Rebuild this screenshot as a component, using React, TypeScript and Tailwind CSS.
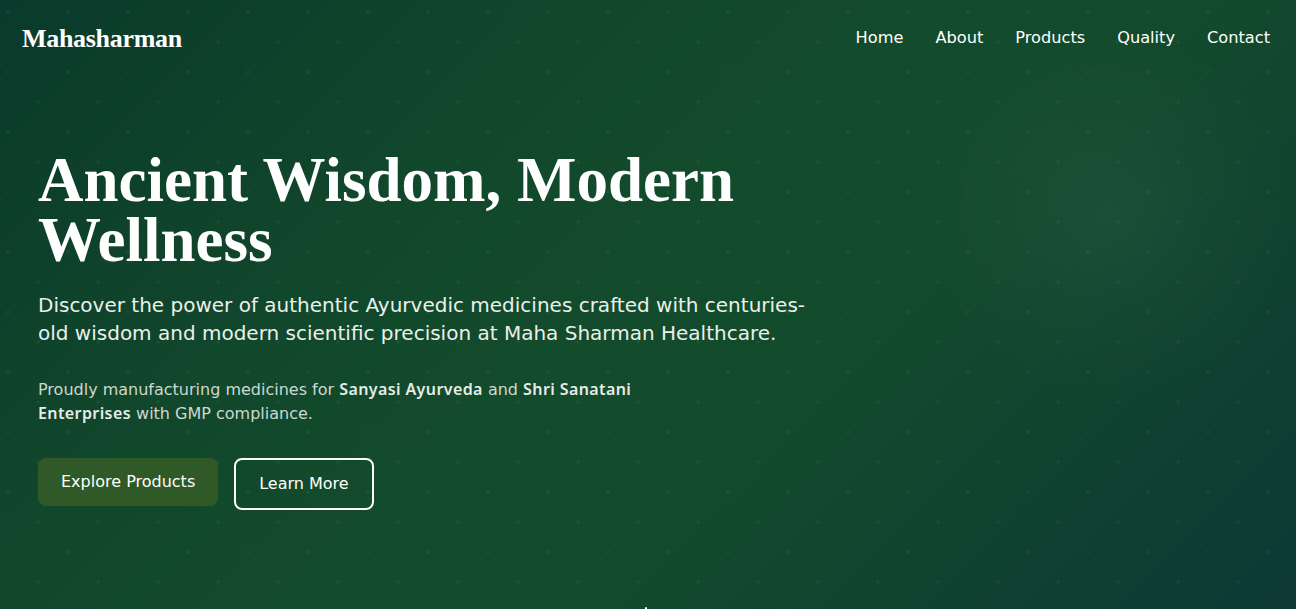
import React from "react";

const sans = "font-['DejaVu_Sans','Noto_Sans',sans-serif]";
const serif = "font-['Liberation_Serif','DejaVu_Serif',serif]";
const strong = "font-['Noto_Sans','DejaVu_Sans',sans-serif] font-semibold leading-[20px] tracking-[0.4px] text-[#e6ece7]";

export default function App() {
  return (
    <div className="relative h-[609px] w-full overflow-hidden bg-[linear-gradient(135deg,#0a3a2b_0%,#11472b_30%,#134c2c_50%,#124a2d_65%,#0d3835_100%)] text-white">
      <div className="pointer-events-none absolute inset-0 bg-[radial-gradient(circle_at_1110px_215px,rgba(255,255,255,0.045)_0px,rgba(255,255,255,0.02)_90px,transparent_190px)]" />
      <div className="pointer-events-none absolute inset-0 bg-[radial-gradient(circle_at_8px_12px,rgba(255,255,255,0.05)_0px,rgba(255,255,255,0.05)_1.2px,transparent_2px),radial-gradient(circle_at_38px_42px,rgba(255,255,255,0.05)_0px,rgba(255,255,255,0.05)_1.2px,transparent_2px)] bg-[length:60px_60px]" />

      <div className="relative">
        <nav className="flex items-start justify-between pl-[22px] pr-[26px] pt-[23px] pb-[23px]">
          <a className={`${serif} text-[26px] font-bold leading-[32px] tracking-[-0.3px] text-white`}>
            Mahasharman
          </a>
          <ul className={`${sans} mt-[3px] flex gap-8 text-[16.2px] leading-6 text-white`}>
            <li>Home</li>
            <li>About</li>
            <li>Products</li>
            <li>Quality</li>
            <li>Contact</li>
          </ul>
        </nav>

        <section className="pl-[38px] pt-[72px]">
          <h1 className={`${serif} text-[63px] font-bold leading-[60px] text-white`}>
            <span className="block whitespace-nowrap">Ancient Wisdom, Modern</span>
            <span className="block whitespace-nowrap">Wellness</span>
          </h1>
          <p className={`${sans} mt-[21px] text-[20px] leading-7 text-[#eaf0eb]`}>
            <span className="block whitespace-nowrap">
              Discover the power of authentic Ayurvedic medicines crafted with centuries-
            </span>
            <span className="block whitespace-nowrap">
              old wisdom and modern scientific precision at Maha Sharman Healthcare.
            </span>
          </p>
          <p className={`${sans} mt-[31px] text-[16px] leading-6 text-[#cdd8d0]`}>
            <span className="block whitespace-nowrap">
              Proudly manufacturing medicines for{" "}
              <strong className={strong}>Sanyasi Ayurveda</strong> and{" "}
              <strong className={strong}>Shri Sanatani</strong>
            </span>
            <span className="block whitespace-nowrap">
              <strong className={strong}>Enterprises</strong> with GMP compliance.
            </span>
          </p>
          <div className={`${sans} mt-8 flex items-start gap-4 text-[16px] leading-6`}>
            <button className="rounded-lg bg-[#2f5927] px-[23px] py-3 text-white">
              Explore Products
            </button>
            <button className="rounded-lg border-2 border-white px-[23px] py-3 text-white">
              Learn More
            </button>
          </div>
        </section>
      </div>

      <div className="absolute left-[645px] top-[607px] h-[4px] w-[2px] rounded-sm bg-white" />
    </div>
  );
}
